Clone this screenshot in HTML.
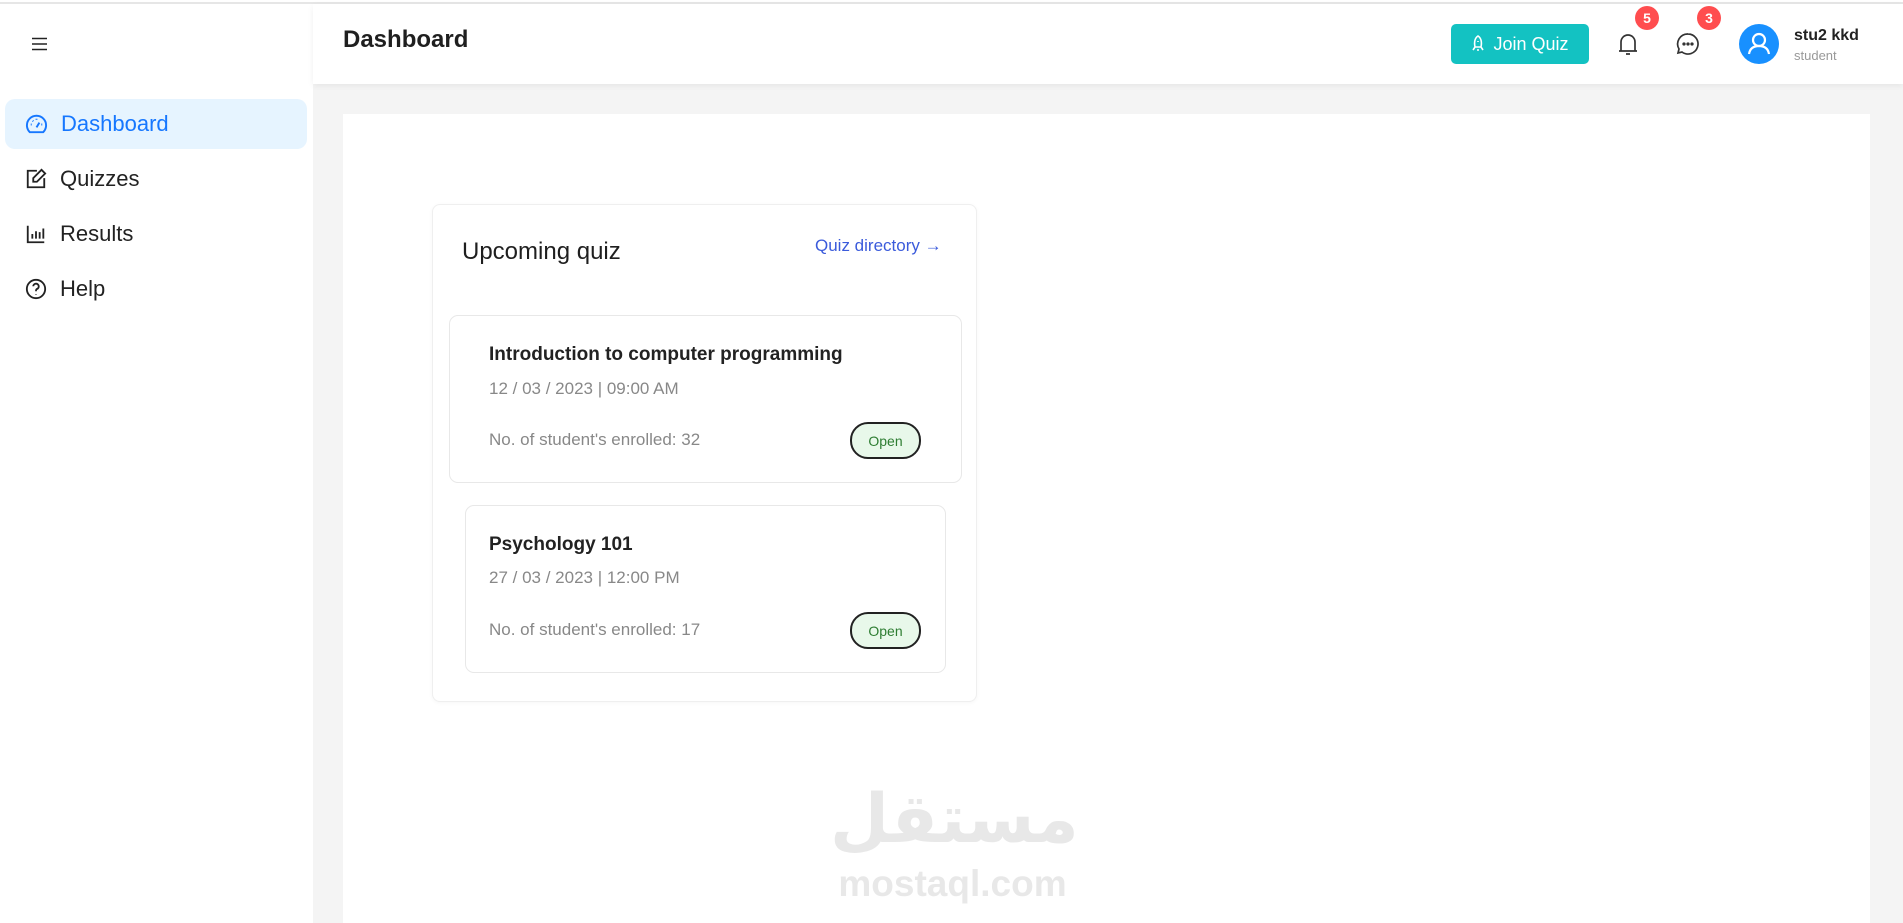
<!DOCTYPE html>
<html><head><meta charset="utf-8"><style>
*{box-sizing:border-box;margin:0;padding:0}
body{width:1903px;height:923px;overflow:hidden;background:#f4f4f4;font-family:"Liberation Sans","DejaVu Sans",sans-serif;position:relative;color:#1f1f1f}
.topline{position:absolute;left:0;top:0;width:1903px;height:4px;background:#fff;border-bottom:2px solid #e6e6e6}
.side{position:absolute;left:0;top:4px;width:313px;height:919px;background:#fff}
.header{position:absolute;left:313px;top:4px;width:1590px;height:80px;background:#fff;box-shadow:0 2px 6px rgba(0,0,0,.06)}
.panel{position:absolute;left:343px;top:114px;width:1527px;height:809px;background:#fff}
.item{position:absolute;left:5px;width:302px;height:50px;display:flex;align-items:center;padding-left:20px;font-size:22px;color:#222}
.item svg{margin-right:13px}
.active{background:#e6f4ff;border-radius:10px;color:#1677ff}
.abs{position:absolute}
.card{position:absolute;left:432px;top:204px;width:545px;height:498px;background:#fff;border:1px solid #efefef;border-radius:8px;box-shadow:0 1px 4px rgba(0,0,0,.04)}
.q{position:absolute;background:#fff;border:1px solid #e8e8e8;border-radius:9px}
.qt{position:absolute;left:39px;font-size:19px;font-weight:bold;color:#222;white-space:nowrap}
.qd{position:absolute;left:39px;font-size:17px;color:#888;white-space:nowrap}
.pill{position:absolute;width:71px;height:37px;border:2px solid #222;border-radius:18px;background:#e8f8ea;color:#2e7d32;font-size:14px;display:flex;align-items:center;justify-content:center}
.badge{position:absolute;width:24px;height:24px;border-radius:50%;background:#ff4d4f;color:#fff;font-size:14px;font-weight:bold;display:flex;align-items:center;justify-content:center}
</style></head><body>
<div class="topline"></div>
<div class="side">
<svg class="abs" style="left:31px;top:33px" width="17" height="14" viewBox="0 0 17 14"><path d="M1 1.5H16M1 7H16M1 12.5H16" stroke="#222" stroke-width="1.6"/></svg>
<div class="item active" style="top:95px"><svg width="23" height="23" viewBox="0 0 24 24" fill="none" stroke="#1677ff" stroke-width="2"><path d="M5 20A10 10 0 1 1 19 20z"/><path d="M12 15l3-5M6 12h1M12 6v1M18 12h-1M8 8l.7.7"/></svg>Dashboard</div>
<div class="item" style="top:150px"><svg width="22" height="22" viewBox="0 0 24 24" fill="none" stroke="#222" stroke-width="2"><path d="M13 3H3v18h18V11"/><path d="M18 2l4 4-9 9H9v-4z"/></svg>Quizzes</div>
<div class="item" style="top:205px"><svg width="22" height="22" viewBox="0 0 24 24" fill="none" stroke="#222" stroke-width="2"><path d="M3 3v18h18M8 17v-5M12 17V9M16 17v-7M20 17V6"/></svg>Results</div>
<div class="item" style="top:260px"><svg width="22" height="22" viewBox="0 0 24 24" fill="none" stroke="#222" stroke-width="2"><circle cx="12" cy="12" r="10"/><path d="M9 9a3 3 0 1 1 4 3c-1 .5-1 1-1 2.5M12 17.5v.5"/></svg>Help</div>
</div>
<div class="header">
<div class="abs" style="left:30px;top:22px;font-size:24px;font-weight:bold;color:#1f1f1f">Dashboard</div>
<div class="abs" style="left:1138px;top:20px;width:138px;height:40px;background:#13c2c2;border-radius:5px;color:#fff;font-size:18px;display:flex;align-items:center;justify-content:center"><svg width="14" height="18" viewBox="0 0 14 18" fill="none" stroke="#fff" stroke-width="1.6" style="margin-right:8px"><path d="M7 1c3 2 4 6 3 11H4C3 7 4 3 7 1zM4 12l-2 3M10 12l2 3M7 6v1M6 15h2"/></svg>Join Quiz</div>
<svg class="abs" style="left:1305px;top:28px" width="20" height="24" viewBox="0 0 20 24" fill="none" stroke="#333" stroke-width="1.7"><path d="M3 19V10a7 7 0 0 1 14 0v9zM1 19h18M8 22h4"/></svg>
<div class="badge" style="left:1322px;top:2px">5</div>
<svg class="abs" style="left:1363px;top:28px" width="24" height="24" viewBox="0 0 24 24" fill="none" stroke="#333" stroke-width="1.7"><path d="M12 2a10 10 0 1 1-6 18l-4 1 1-4A10 10 0 0 1 12 2z"/><circle cx="8" cy="12" r=".8" fill="#333"/><circle cx="12" cy="12" r=".8" fill="#333"/><circle cx="16" cy="12" r=".8" fill="#333"/></svg>
<div class="badge" style="left:1384px;top:2px">3</div>
<div class="abs" style="left:1426px;top:20px;width:40px;height:40px;border-radius:50%;background:#1890ff"><svg width="40" height="40" viewBox="0 0 40 40" fill="none" stroke="#fff" stroke-width="2.2"><circle cx="20" cy="16" r="6"/><path d="M10 30c1-6 5-8 10-8s9 2 10 8"/></svg></div>
<div class="abs" style="left:1481px;top:23px;font-size:16px;font-weight:bold;color:#222">stu2 kkd</div>
<div class="abs" style="left:1481px;top:44px;font-size:13px;color:#999">student</div>
</div>
<div class="panel"></div>
<div class="card">
<div class="abs" style="left:29px;top:33px;font-size:24px;color:#1f1f1f">Upcoming quiz</div>
<div class="abs" style="left:382px;top:31px;font-size:17px;color:#3b5bdb;white-space:nowrap">Quiz directory →</div>
<div class="q" style="left:16px;top:110px;width:513px;height:168px">
<div class="qt" style="top:28px">Introduction to computer programming</div>
<div class="qd" style="top:63px">12 / 03 / 2023 | 09:00 AM</div>
<div class="qd" style="top:114px">No. of student's enrolled: 32</div>
<div class="pill" style="left:400px;top:106px">Open</div>
</div>
<div class="q" style="left:32px;top:300px;width:481px;height:168px">
<div class="qt" style="left:23px;top:28px">Psychology 101</div>
<div class="qd" style="left:23px;top:62px">27 / 03 / 2023 | 12:00 PM</div>
<div class="qd" style="left:23px;top:114px">No. of student's enrolled: 17</div>
<div class="pill" style="left:384px;top:106px">Open</div>
</div>
</div>
<div class="abs" style="left:830px;top:775px;width:245px;text-align:center;font-family:'DejaVu Sans',sans-serif;font-size:68px;font-weight:bold;color:#e8e8e8;line-height:90px">مستقل</div>
<div class="abs" style="left:835px;top:863px;width:235px;text-align:center;font-size:37px;font-weight:bold;color:#e8e8e8">mostaql.com</div>
</body></html>
